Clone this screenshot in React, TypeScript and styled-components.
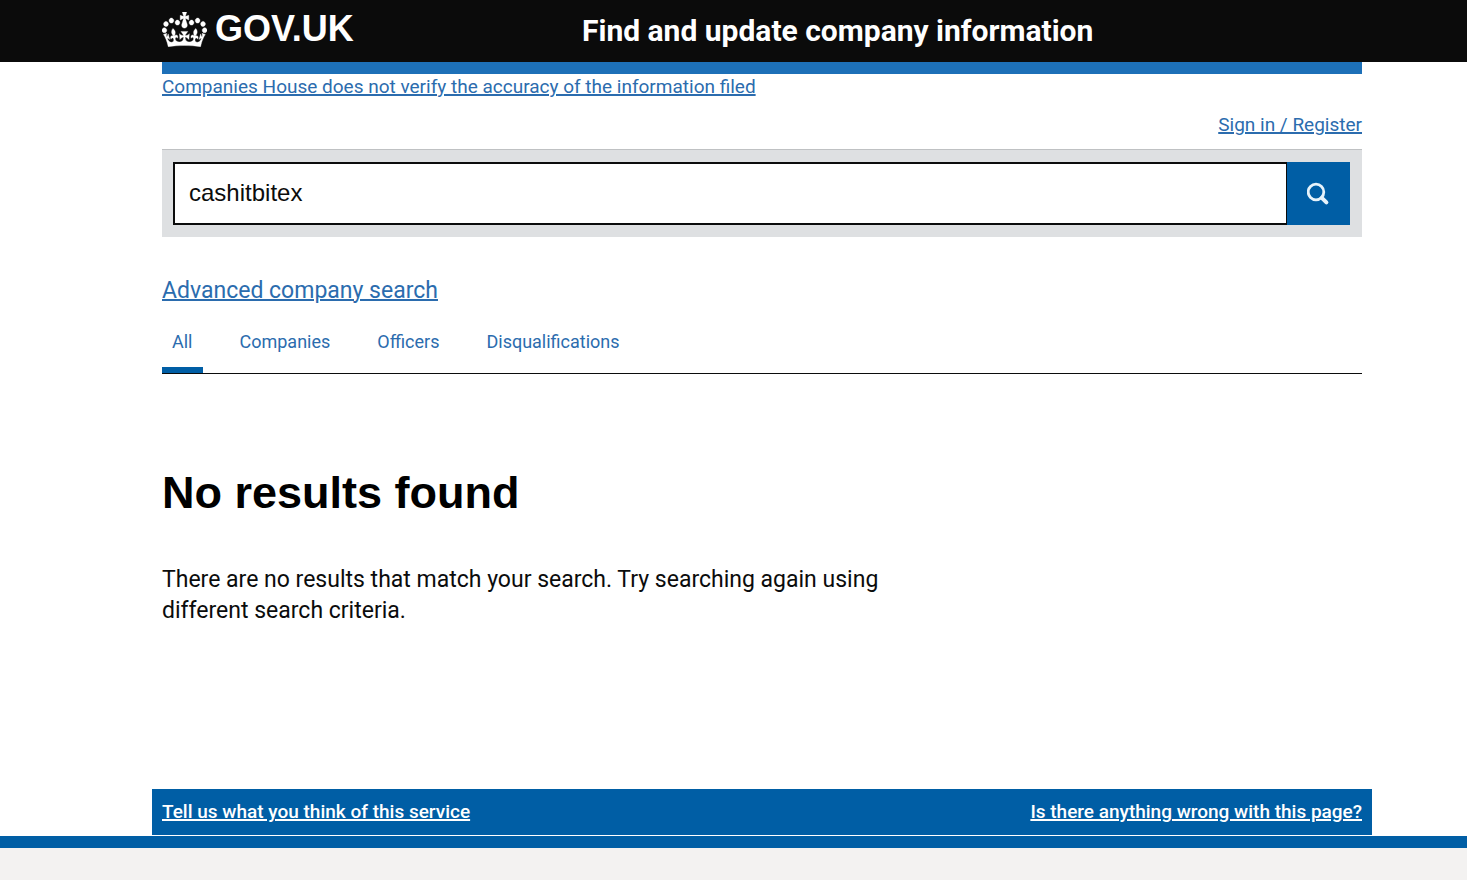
import React, { useState } from "react";
import styled, { createGlobalStyle } from "styled-components";

const BLUE = "#005ea5";
const LINK = "#2b6cae";
const UI_FONT = `Roboto, "Liberation Sans", Arial, sans-serif`;
const ARIAL = `"Liberation Sans", Arial, sans-serif`;

const GlobalStyle = createGlobalStyle`
  *, *::before, *::after { box-sizing: border-box; }
  body {
    margin: 0;
    background: #fff;
    color: #0b0c0c;
    font-family: ${UI_FONT};
    font-size: 19px;
    line-height: 24px;
  }
  #root { min-height: 100vh; display: flex; flex-direction: column; }
`;

const Header = styled.header`
  background: #0b0b0b;
  color: #fff;
  padding: 0 105px 0 162px;
  display: flex;
  align-items: center;
  height: 62px;
`;

const HeaderLogo = styled.div`
  flex: 0 0 35%;
`;

const LogoLink = styled.a`
  display: inline-flex;
  align-items: center;
  gap: 8px;
  color: #fff;
  text-decoration: none;
  font: bold 36px/40px ${ARIAL};
`;

const Crown = styled.svg`
  display: block;
  width: 45px;
  height: 35px;
`;

const ServiceName = styled.a`
  color: #fff;
  text-decoration: none;
  white-space: nowrap;
  font-size: 30px;
  font-weight: 700;
  line-height: 32px;
`;

const Main = styled.main`
  margin: 0 105px 0 162px;
  flex: 1;
`;

const PhaseBar = styled.div`
  height: 12px;
  background: #1d70b8;
`;

const TextLink = styled.a<{ $large?: boolean }>`
  color: ${LINK};
  font-size: ${(p) => (p.$large ? 23 : 19)}px;
  line-height: ${(p) => (p.$large ? 30 : 24)}px;
  text-decoration-thickness: 2px;
`;

const NoticeRow = styled.div`
  display: flex;
  padding-top: 1px;
`;

const AccountRow = styled.nav`
  display: flex;
  justify-content: flex-end;
  padding: 14px 0 12px;
`;

const SearchForm = styled.form`
  display: flex;
  padding: 12px 12px 12px 11px;
  background: #dee0e2;
  border-top: 1px solid #bfc1c3;
`;

const SearchInput = styled.input`
  flex: 1;
  min-width: 0;
  height: 63px;
  padding: 0 14px 2px;
  border: 2px solid #0b0c0c;
  border-right-width: 1px;
  border-radius: 0;
  background: #fff;
  color: #0b0c0c;
  font: 24px/30px ${ARIAL};
  outline: none;
`;

const SearchButton = styled.button`
  display: flex;
  align-items: center;
  justify-content: center;
  width: 63px;
  height: 63px;
  padding: 0;
  border: 0;
  background: ${BLUE};
  color: #fff;
  cursor: pointer;
`;

const AdvancedRow = styled.div`
  display: flex;
  padding: 39px 0 19px;
`;

const Tabs = styled.nav`
  display: flex;
  gap: 27px;
  border-bottom: 1px solid #0b0c0c;
`;

const Tab = styled.a<{ $current?: boolean }>`
  padding: 5px 10px 13px;
  border-bottom: 6px solid ${(p) => (p.$current ? BLUE : "transparent")};
  color: ${LINK};
  font-size: 18px;
  line-height: 24px;
  text-decoration: none;
`;

const Results = styled.section`
  max-width: 720px;
  padding: 92px 0 163px;
`;

const Heading = styled.h1`
  margin: 0 0 44px;
  font: bold 45px/54px ${ARIAL};
  color: #000;
`;

const Message = styled.p`
  margin: 0;
  font-size: 23px;
  line-height: 31px;
`;

const Feedback = styled.div`
  display: flex;
  justify-content: space-between;
  margin: 0 95px 1px 152px;
  padding: 11px 10px;
  background: ${BLUE};
`;

const FeedbackLink = styled.a`
  color: #fff;
  font-size: 19px;
  font-weight: 500;
  line-height: 24px;
  text-decoration-thickness: 2px;
`;

const Footer = styled.footer`
  height: 44px;
  border-top: 12px solid ${BLUE};
  background: #f3f2f1;
`;

const TABS = ["All", "Companies", "Officers", "Disqualifications"];

function CrownIcon() {
  return (
    <Crown viewBox="0 0 132 97" preserveAspectRatio="none" aria-hidden="true">
      <path
        fill="currentColor"
        stroke="currentColor"
        strokeWidth="1"
        fillRule="evenodd"
        d="M25 30.2c3.5 1.5 7.7-.2 9.1-3.7 1.5-3.6-.2-7.8-3.9-9.2-3.6-1.4-7.6.3-9.1 3.9-1.4 3.5.3 7.5 3.9 9zM9 39.5c3.6 1.5 7.8-.2 9.2-3.7 1.5-3.6-.2-7.8-3.9-9.1-3.6-1.5-7.6.2-9.1 3.8-1.4 3.5.3 7.5 3.8 9zM4.4 57.2c3.5 1.5 7.7-.2 9.1-3.8 1.5-3.6-.2-7.7-3.9-9.1-3.5-1.5-7.6.3-9.1 3.8-1.4 3.5.3 7.6 3.9 9.1zm38.3-21.4c3.5 1.5 7.7-.2 9.1-3.8 1.5-3.6-.2-7.7-3.9-9.1-3.6-1.5-7.6.3-9.1 3.8-1.3 3.6.4 7.7 3.9 9.1zm64.4-5.6c-3.6 1.5-7.8-.2-9.1-3.7-1.5-3.6.2-7.8 3.8-9.2 3.6-1.4 7.7.3 9.2 3.9 1.3 3.5-.4 7.5-3.9 9zm15.9 9.3c-3.6 1.5-7.7-.2-9.1-3.7-1.5-3.6.2-7.8 3.7-9.1 3.6-1.5 7.7.2 9.2 3.8 1.5 3.5-.3 7.5-3.8 9zm4.7 17.7c-3.6 1.5-7.8-.2-9.2-3.8-1.5-3.6.2-7.7 3.9-9.1 3.6-1.5 7.7.3 9.2 3.8 1.3 3.5-.4 7.6-3.9 9.1zM89.3 35.8c-3.6 1.5-7.8-.2-9.2-3.8-1.4-3.6.2-7.7 3.9-9.1 3.6-1.5 7.7.3 9.2 3.8 1.4 3.6-.3 7.7-3.9 9.1zM69.7 17.7l8.9 4.7V9.3l-8.9 2.8c-.2-.3-.5-.6-.9-.9L72.4 0H59.6l3.5 11.2c-.3.3-.6.5-.9.9l-8.8-2.8v13.1l8.8-4.7c.3.3.6.7.9.9l-5 15.4v.1c-.2.8-.4 1.6-.4 2.4 0 4.1 3.1 7.5 7 8.1h.2c.3 0 .7.1 1 .1.4 0 .7 0 1-.1h.2c4-.6 7.1-4.1 7.1-8.1 0-.8-.1-1.7-.4-2.4V34l-5.1-15.4c.4-.2.7-.6 1-.9zM66 92.8c16.9 0 32.8 1.1 47.1 3.2 4-16.9 8.9-26.7 14-33.5l-9.6-3.4c1 4.9 1.1 7.2 0 10.2-1.5-1.4-3-4.3-4.2-8.7L108.6 76c2.8-2 5-3.2 7.5-3.3-4.4 9.4-10 11.9-13.6 11.2-4.3-.8-6.3-4.6-5.6-7.9 1-4.7 5.7-5.9 8-.5 4.3-8.7-3-11.4-7.6-8.8 7.1-7.2 7.9-13.5 2.1-21.1-8 6.1-8.1 12.3-4.5 20.8-4.7-5.4-12.1-2.5-9.5 6.2 3.4-5.2 7.9-2 7.2 3.1-.6 4.3-6.4 7.8-13.5 7.2-10.3-.9-10.9-8-11.2-13.8 2.5-.5 7.1 1.8 11 7.3L80.2 60c-4.1 4.4-8 5.3-12.3 5.4 1.4-4.4 8-11.6 8-11.6H55.5s6.4 7.2 7.9 11.6c-4.2-.1-8-1-12.3-5.4l1.4 16.4c3.9-5.5 8.5-7.7 10.9-7.3-.3 5.8-.9 12.8-11.1 13.8-7.2.6-12.9-2.9-13.5-7.2-.7-5 3.8-8.3 7.1-3.1 2.7-8.7-4.6-11.6-9.4-6.2 3.7-8.5 3.6-14.7-4.6-20.8-5.8 7.6-5 13.9 2.2 21.1-4.7-2.6-11.9.1-7.7 8.8 2.3-5.5 7.1-4.2 8.1.5.7 3.3-1.3 7.1-5.7 7.9-3.5.7-9-1.8-13.5-11.2 2.5.1 4.7 1.3 7.5 3.3l-4.7-15.4c-1.2 4.4-2.7 7.2-4.3 8.7-1.1-3-.9-5.3 0-10.2l-9.5 3.4c5 6.9 9.9 16.7 14 33.5 14.8-2.1 30.8-3.2 47.7-3.2z"
      />
    </Crown>
  );
}

function SearchIcon() {
  return (
    <svg width="24" height="24" viewBox="0 0 24 24" fill="none" stroke="#e6f3fb" aria-hidden="true">
      <circle cx="9" cy="10" r="7.8" strokeWidth="2.8" />
      <path d="M14.8 15.8 L19.4 20.4" strokeWidth="4" strokeLinecap="round" />
    </svg>
  );
}

export default function App() {
  const [query, setQuery] = useState("cashitbitex");

  return (
    <>
      <GlobalStyle />
      <Header>
        <HeaderLogo>
          <LogoLink href="#home">
            <CrownIcon />
            GOV.UK
          </LogoLink>
        </HeaderLogo>
        <ServiceName href="#service">Find and update company information</ServiceName>
      </Header>

      <Main>
        <PhaseBar />
        <NoticeRow>
          <TextLink href="#accuracy">
            Companies House does not verify the accuracy of the information filed
          </TextLink>
        </NoticeRow>
        <AccountRow>
          <TextLink href="#signin">Sign in / Register</TextLink>
        </AccountRow>

        <SearchForm role="search" onSubmit={(e) => e.preventDefault()}>
          <SearchInput
            type="text"
            aria-label="Search companies and officers"
            value={query}
            onChange={(e) => setQuery(e.target.value)}
          />
          <SearchButton type="submit" aria-label="Search">
            <SearchIcon />
          </SearchButton>
        </SearchForm>

        <AdvancedRow>
          <TextLink $large href="#advanced">Advanced company search</TextLink>
        </AdvancedRow>

        <Tabs>
          {TABS.map((name, i) => (
            <Tab key={name} href={`#${name.toLowerCase()}`} $current={i === 0}>
              {name}
            </Tab>
          ))}
        </Tabs>

        <Results>
          <Heading>No results found</Heading>
          <Message>
            There are no results that match your search. Try searching again using different
            search criteria.
          </Message>
        </Results>
      </Main>

      <Feedback>
        <FeedbackLink href="#feedback">Tell us what you think of this service</FeedbackLink>
        <FeedbackLink href="#problem">Is there anything wrong with this page?</FeedbackLink>
      </Feedback>
      <Footer />
    </>
  );
}
